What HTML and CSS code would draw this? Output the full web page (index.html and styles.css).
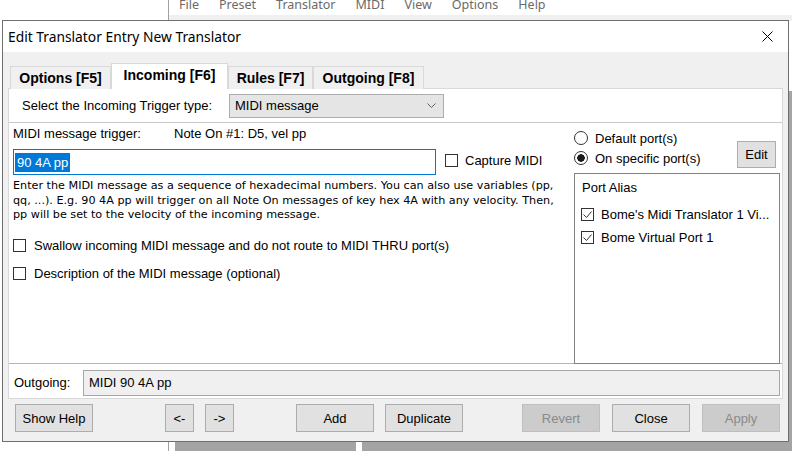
FILE: index.html
```html
<!DOCTYPE html>
<html lang="en">
<head>
  <meta charset="utf-8" />
  <meta name="viewport" content="width=device-width, initial-scale=1" />
  <title>Edit Translator Entry New Translator</title>

  <link rel="stylesheet" href="styles.css">
</head>

<body>
  <div class="backwin">
    <div class="menubar">
      <span>File</span>
      <span>Preset</span>
      <span>Translator</span>
      <span>MIDI</span>
      <span>View</span>
      <span>Options</span>
      <span>Help</span>
    </div>
    <div class="back-strip"></div>
    <div class="back-body">
      <div class="back-left"></div>
      <div class="back-right"></div>
    </div>
  </div>

  <div class="dialog">
    <div class="titlebar">
      <span class="title">Edit Translator Entry New Translator</span>
      <svg class="close" width="11" height="11" viewBox="0 0 11 11">
        <path d="M0.5 0.5 L10.5 10.5 M10.5 0.5 L0.5 10.5" stroke="#000" stroke-width="1" fill="none" />
      </svg>
    </div>

    <div class="dialog-body">
      <div class="tabs">
        <div class="tab tab-options">Options [F5]</div>
        <div class="tab tab-incoming active">Incoming [F6]</div>
        <div class="tab tab-rules">Rules [F7]</div>
        <div class="tab tab-outgoing">Outgoing [F8]</div>
      </div>

      <div class="panel">
        <div class="trigger-row">
          <span class="trigger-label">Select the Incoming Trigger type:</span>
          <div class="select">
            <span>MIDI message</span>
            <svg width="9" height="5" viewBox="0 0 9 5">
              <polyline points="0.5,0.5 4.5,4.5 8.5,0.5" stroke="#606060" fill="none" />
            </svg>
          </div>
        </div>

        <div class="main">
          <div class="left-col">
            <div class="trigger-info">
              <span class="info-label">MIDI message trigger:</span>
              <span>Note On #1: D5, vel pp</span>
            </div>

            <div class="input-row">
              <div class="text-input"><span class="sel">90 4A pp</span></div>
              <label class="check capture"><span class="box"></span>Capture MIDI</label>
            </div>

            <p class="help">
              Enter the MIDI message as a sequence of hexadecimal numbers. You can also use variables (pp,<br>
              qq, ...). E.g. 90 4A pp will trigger on all Note On messages of key hex 4A with any velocity. Then,<br>
              pp will be set to the velocity of the incoming message.
            </p>

            <label class="check swallow"><span class="box"></span>Swallow incoming MIDI message and do not route to MIDI THRU port(s)</label>
            <label class="check describe"><span class="box"></span>Description of the MIDI message (optional)</label>
          </div>

          <div class="right-col">
            <div class="port-mode">
              <div class="radios">
                <label class="radio"><span class="circle"></span>Default port(s)</label>
                <label class="radio"><span class="circle on"></span>On specific port(s)</label>
              </div>
              <button class="btn edit-btn">Edit</button>
            </div>

            <div class="port-list">
              <div class="port-head">Port Alias</div>
              <label class="check port">
                <span class="box">
                  <svg width="11" height="11" viewBox="0 0 11 11"><polyline points="1.5,5.5 4.5,8.5 9.5,2.5" stroke="#333" fill="none" /></svg>
                </span>Bome's Midi Translator 1 Vi...
              </label>
              <label class="check port">
                <span class="box">
                  <svg width="11" height="11" viewBox="0 0 11 11"><polyline points="1.5,5.5 4.5,8.5 9.5,2.5" stroke="#333" fill="none" /></svg>
                </span>Bome Virtual Port 1
              </label>
            </div>
          </div>
        </div>

        <div class="outgoing-row">
          <span class="out-label">Outgoing:</span>
          <div class="out-field">MIDI 90 4A pp</div>
        </div>
      </div>

      <div class="buttons">
        <button class="btn help-btn">Show Help</button>
        <div class="btn-group nav-group">
          <button class="btn small-btn">&lt;-</button>
          <button class="btn small-btn">-&gt;</button>
        </div>
        <div class="btn-group edit-group">
          <button class="btn">Add</button>
          <button class="btn">Duplicate</button>
        </div>
        <div class="btn-group right-group">
          <button class="btn" disabled>Revert</button>
          <button class="btn">Close</button>
          <button class="btn" disabled>Apply</button>
        </div>
      </div>
    </div>
  </div>
</body>
</html>
```

FILE: styles.css
```css
* {
  box-sizing: border-box;
}

body {
  margin: 0;
  width: 792px;
  height: 451px;
  position: relative;
  overflow: hidden;
  background: #fff;
  font-family: "Liberation Sans", Arial, sans-serif;
  font-size: 13px;
  color: #000;
}

.btn {
  width: 78px;
  height: 28px;
  padding: 0;
  background: #e1e1e1;
  border: 1px solid #adadad;
  font-family: "Liberation Sans", Arial, sans-serif;
  font-size: 13px;
  color: #000;
}

.btn:disabled {
  background: #cccccc;
  border-color: #bfbfbf;
  color: #8a8a8a;
}

/* main window sitting behind the dialog */
.backwin {
  position: absolute;
  left: 168px;
  top: 0;
  width: 624px;
  height: 451px;
  border-left: 1px solid #a0a0a0;
  display: flex;
  flex-direction: column;
}

.menubar {
  height: 15px;
  display: flex;
  gap: 20px;
  padding-left: 10px;
  overflow: hidden;
  font-family: "Noto Sans", sans-serif;
  font-size: 12.5px;
  line-height: 13px;
  color: #6a6a6a;
}

.menubar span {
  margin-top: -2px;
}

.back-strip {
  height: 6px;
  background: #f0f0f0;
}

.back-body {
  flex: 1;
  display: flex;
  gap: 6px;
  padding: 70px 0 0 6px;
}

.back-left {
  width: 181px;
  background: #a4a4a4;
}

.back-right {
  flex: 1;
  background: #a4a4a4;
}

/* dialog */
.dialog {
  position: absolute;
  left: 2px;
  top: 20px;
  width: 787px;
  height: 422px;
  border: 1px solid #6f6f6f;
  background: #f0f0f0;
  display: flex;
  flex-direction: column;
}

.titlebar {
  height: 31px;
  flex-shrink: 0;
  background: #fff;
  display: flex;
  align-items: center;
  justify-content: space-between;
  padding: 0 15px 0 5px;
}

.title {
  font-family: "Noto Sans", sans-serif;
  font-size: 13.8px;
}

.dialog-body {
  flex: 1;
  display: flex;
  flex-direction: column;
  padding: 11px 5px 8px 5px;
}

/* tabs */
.tabs {
  height: 26px;
  display: flex;
  align-items: flex-end;
  padding-left: 2px;
  margin-bottom: -1px;
  position: relative;
  z-index: 1;
}

.tab {
  height: 23px;
  border: 1px solid #d9d9d9;
  border-bottom: none;
  background: #f0f0f0;
  font-weight: bold;
  font-size: 14px;
  line-height: 22px;
  text-align: center;
}

.tab.active {
  height: 26px;
  background: #fff;
  line-height: 22px;
}

.tab-options { width: 101px; }
.tab-incoming { width: 117px; }
.tab-rules { width: 85px; }
.tab-outgoing { width: 111px; }

.panel {
  height: 311px;
  background: #fff;
  border: 1px solid #d9d9d9;
  display: flex;
  flex-direction: column;
}

.trigger-row {
  height: 34px;
  display: flex;
  align-items: center;
  padding-left: 13px;
  border-bottom: 1px solid #c8c8c8;
}

.trigger-label {
  width: 207px;
}

.select {
  width: 215px;
  height: 24px;
  background: #e5e5e5;
  border: 1px solid #adadad;
  display: flex;
  align-items: center;
  justify-content: space-between;
  padding: 0 7px 0 5px;
}

.main {
  height: 241px;
  display: flex;
  justify-content: space-between;
  border-bottom: 1px solid #b4b4b4;
}

.left-col {
  padding: 3px 0 0 4px;
}

.trigger-info {
  display: flex;
  line-height: 16px;
}

.info-label {
  width: 161px;
}

.input-row {
  display: flex;
  align-items: center;
  margin-top: 7px;
}

.text-input {
  width: 423px;
  height: 26px;
  border: 1px solid #0078d7;
  padding: 3px 1px;
}

.sel {
  display: inline-block;
  background: #0078d7;
  color: #fff;
  line-height: 19px;
  padding: 0 2px;
}

.check {
  display: flex;
  align-items: center;
  gap: 7px;
  height: 18px;
}

.box {
  width: 13px;
  height: 13px;
  flex-shrink: 0;
  border: 1px solid #333;
  background: #fff;
  display: flex;
}

.capture {
  margin-left: 9px;
  margin-top: -3px;
}

.help {
  margin: 4px 0 0;
  font-family: "DejaVu Sans", sans-serif;
  font-size: 11.2px;
  line-height: 14.5px;
  white-space: nowrap;
}

.swallow {
  margin-top: 14px;
  gap: 8px;
}

.describe {
  margin-top: 10px;
  gap: 8px;
}

.right-col {
  width: 206px;
  flex-shrink: 0;
  margin-right: 2px;
  padding-top: 6px;
}

.port-mode {
  display: flex;
  justify-content: space-between;
}

.radios {
  display: flex;
  flex-direction: column;
  gap: 2px;
}

.radio {
  display: flex;
  align-items: center;
  gap: 7px;
  height: 18px;
  white-space: nowrap;
}

.circle {
  width: 14px;
  height: 14px;
  border: 1px solid #333;
  border-radius: 50%;
  background: #fff;
}

.circle.on {
  background: radial-gradient(circle, #1a1a1a 0 3.5px, #fff 4px);
}

.edit-btn {
  width: 39px;
  height: 27px;
  margin: 12px 4px 0 0;
}

.port-list {
  height: 191px;
  margin-top: 5px;
  border: 1px solid #828282;
  padding: 6px 0 0 6px;
}

.port-head {
  line-height: 16px;
  padding-left: 1px;
  margin-bottom: 9px;
}

.port {
  margin-bottom: 5px;
  white-space: nowrap;
}

.outgoing-row {
  flex: 1;
  display: flex;
  align-items: flex-start;
  padding: 6px 2px 0 5px;
}

.out-label {
  width: 69px;
  line-height: 26px;
}

.out-field {
  flex: 1;
  height: 26px;
  background: #f0f0f0;
  border: 1px solid #a6a6a6;
  padding-left: 5px;
  line-height: 24px;
}

/* bottom buttons */
.buttons {
  display: flex;
  margin-top: 5px;
  padding-left: 7px;
}

.btn-group {
  display: flex;
  gap: 11px;
}

.small-btn {
  width: 29px;
}

.nav-group {
  margin-left: 72px;
}

.edit-group {
  margin-left: 62px;
}

.right-group {
  margin-left: 59px;
  gap: 12px;
}
```
